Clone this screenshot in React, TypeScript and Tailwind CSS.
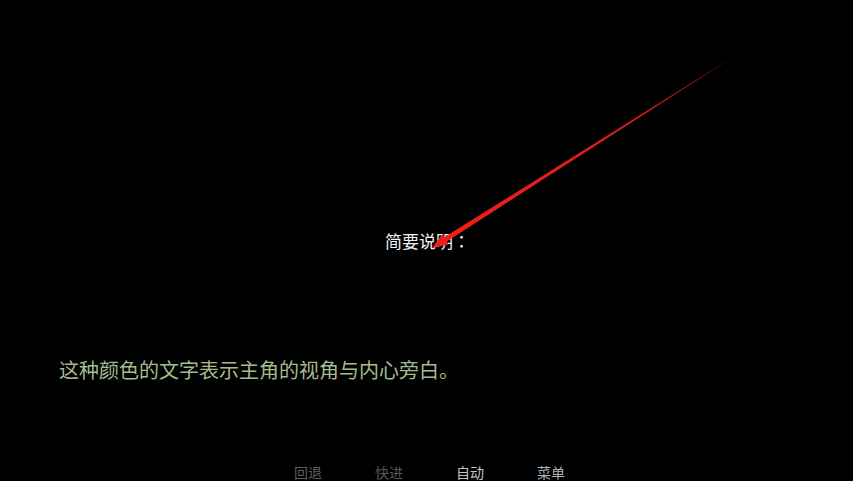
import React from 'react';

const menuItems = [
  { label: '回退', color: 'text-[#5f5f5f]' },
  { label: '快进', color: 'text-[#5a5a5a]' },
  { label: '自动', color: 'text-[#c4c4c4]' },
  { label: '菜单', color: 'text-[#b0b0b0]' },
];

export default function App() {
  return (
    <div className="relative w-full h-[481px] bg-black overflow-hidden font-['Noto_Sans_CJK_SC',sans-serif]">
      <div className="flex flex-col h-full">
        <div className="pt-[230px] text-center text-[17px] leading-[22px] text-[#f2f2f2] pl-[2px]">
          简要说明<span className="font-['Noto_Sans_CJK_JP',sans-serif]">：</span>
        </div>

        <div className="mt-[104px] pl-[59px] text-[20px] leading-[28px] text-[#a3bb8d]">
          这种颜色的文字表示主角的视角与内心旁白。
        </div>

        <div className="mt-auto flex justify-center gap-[53px] pl-[6px] text-[14px] leading-[18px]">
          {menuItems.map((item) => (
            <span key={item.label} className={item.color}>
              {item.label}
            </span>
          ))}
        </div>
      </div>

      {/* annotation arrow drawn over the screen */}
      <svg className="absolute inset-0 pointer-events-none" width="853" height="481" viewBox="0 0 853 481">
        <defs>
          <linearGradient id="arrowFade" x1="740" y1="52" x2="432" y2="248" gradientUnits="userSpaceOnUse">
            <stop offset="0" stopColor="#b0160f" stopOpacity="0.7" />
            <stop offset="0.3" stopColor="#d41d18" />
            <stop offset="1" stopColor="#f0201b" />
          </linearGradient>
        </defs>
        <polygon
          points="741,52 446.8,241.5 448.7,244.5 432,248 442.3,234.3 444.2,237.3"
          fill="url(#arrowFade)"
        />
      </svg>
    </div>
  );
}
